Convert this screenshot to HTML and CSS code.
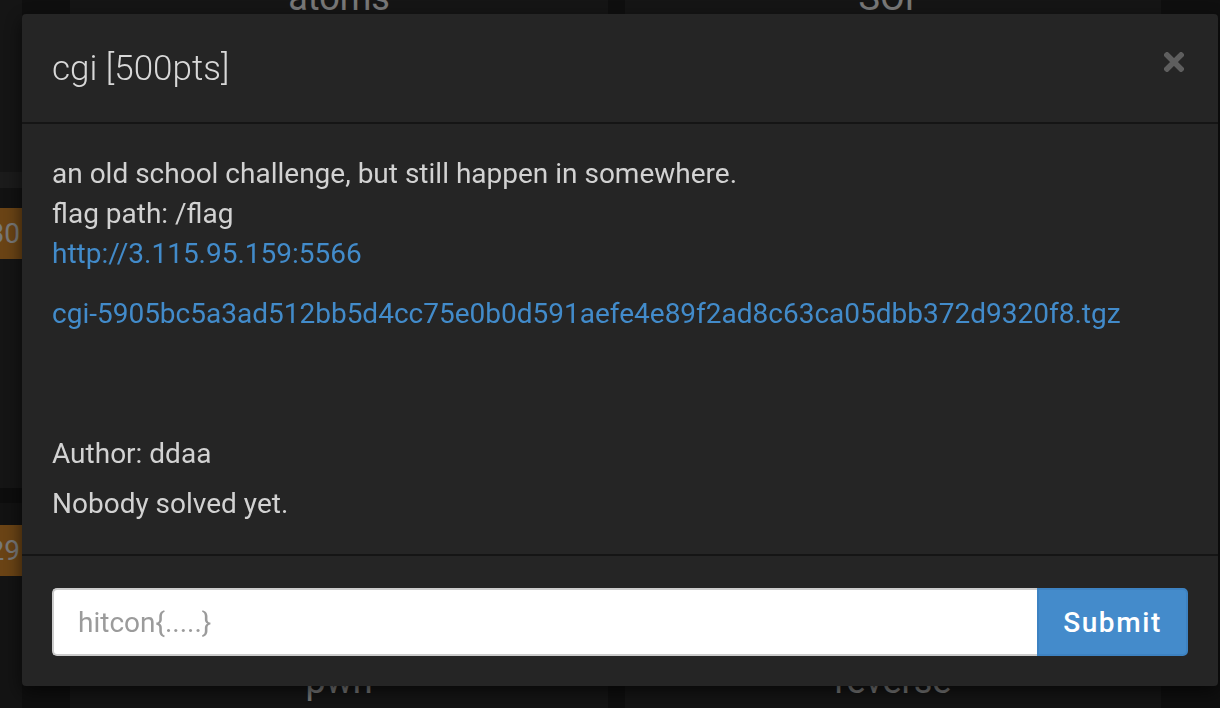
FILE: index.html
```html
<!DOCTYPE html>
<html lang="en">
<head>
<meta charset="utf-8">
<title>cgi [500pts]</title>
<link rel="stylesheet" href="styles.css">
</head>
<body>
<div class="page">
  <div class="side">
    <div class="side-block side-a"></div>
    <div class="side-band"></div>
    <div class="side-block side-b"></div>
    <div class="badge">30</div>
    <div class="side-block side-c"></div>
    <div class="side-gap"></div>
    <div class="side-block side-d"></div>
    <div class="badge">29</div>
    <div class="side-block side-e"></div>
  </div>
  <div class="col col-left">
    <h3 class="cat cat-top">atoms</h3>
    <h3 class="cat cat-bottom">pwn</h3>
  </div>
  <div class="col col-right">
    <h3 class="cat cat-top">SOP</h3>
    <h3 class="cat cat-bottom">reverse</h3>
  </div>
</div>
<div class="backdrop"></div>
<div class="modal">
  <div class="modal-header">
    <h4 class="modal-title">cgi [500pts]</h4>
    <button class="close" type="button" aria-label="Close">
      <svg width="20" height="20" viewBox="0 0 20 20"><path d="M3 3 L17 17 M17 3 L3 17" stroke="#5e5e5e" stroke-width="5.5" stroke-linecap="square" fill="none"/></svg>
    </button>
  </div>
  <div class="modal-body">
    <p class="desc">an old school challenge, but still happen in somewhere.<br>flag path: /flag<br><a href="#">http://3.115.95.159:5566</a></p>
    <p class="file"><a href="#">cgi-5905bc5a3ad512bb5d4cc75e0b0d591aefe4e89f2ad8c63ca05dbb372d9320f8.tgz</a></p>
    <p class="author">Author: ddaa</p>
    <p class="solved">Nobody solved yet.</p>
  </div>
  <div class="modal-footer">
    <form class="input-group" onsubmit="return false">
      <input class="flag-input" type="text" placeholder="hitcon{.....}">
      <button class="btn-submit" type="submit">Submit</button>
    </form>
  </div>
</div>
</body>
</html>
```

FILE: styles.css
```css
* { box-sizing: border-box; }

html, body {
  margin: 0;
  padding: 0;
  width: 1220px;
  height: 708px;
  overflow: hidden;
  background: #1e1e1e;
  font-family: Roboto, "Liberation Sans", Arial, sans-serif;
}

/* ---------- background page (dimmed by backdrop) ---------- */
.page {
  display: flex;
  height: 708px;
  overflow: hidden;
}

.side {
  width: 22px;
  display: flex;
  flex-direction: column;
  flex-shrink: 0;
}
.side-block { background: #2a2a2a; }
.side-a { height: 172px; }
.side-band { height: 16px; background: #363636; }
.side-b { height: 20px; background: #242424; }
.side-c { height: 229px; }
.side-gap { height: 15px; background: #1a1a1a; }
.side-d { height: 22px; background: #242424; }
.side-e { flex: 1; background: #272727; }

.badge {
  height: 51px;
  background: #d4872a;
  color: #f0f0f0;
  font-size: 28px;
  line-height: 51px;
  text-align: right;
  padding-right: 2px;
  overflow: hidden;
  white-space: nowrap;
  direction: rtl;
}

.col {
  display: flex;
  flex-direction: column;
  justify-content: space-between;
  background: #2a2a2a;
  padding-bottom: 7px;
  flex-shrink: 0;
}
.col-left { width: 538px; margin-left: 48px; }
.col-right { width: 536px; margin-left: 17px; }

.cat {
  margin: 0;
  font-size: 36px;
  line-height: 40px;
  font-weight: 400;
  color: #f0f0f0;
  text-align: center;
}
.cat-top { margin-top: -22px; }

.backdrop {
  position: fixed;
  inset: 0;
  background: rgba(0, 0, 0, 0.5);
}

/* ---------- modal ---------- */
.modal {
  position: fixed;
  top: 14px;
  left: 22px;
  width: 1196px;
  height: 672px;
  background: #252525;
  border-radius: 4px;
  box-shadow: 0 6px 18px rgba(0, 0, 0, 0.6);
  display: flex;
  flex-direction: column;
  color: #d2d2d2;
}

.modal-header {
  display: flex;
  justify-content: space-between;
  align-items: flex-start;
  padding: 30px 34px 30px 30px;
  height: 110px;
  border-bottom: 2px solid #151515;
}

.modal-title {
  margin: 0;
  font-size: 35px;
  line-height: 50px;
  font-weight: 300;
  color: #d8d8d8;
}

.close {
  margin: 8px 0 0 0;
  padding: 0;
  border: 0;
  background: none;
  width: 20px;
  height: 20px;
  display: block;
  cursor: pointer;
}
.close svg { display: block; }

.modal-body {
  padding: 30px;
  font-size: 28px;
  line-height: 40px;
  flex: 1;
}
.modal-body p { margin: 0; }
.modal-body .desc { margin-bottom: 20px; }
.modal-body .file { margin-bottom: 100px; }
.modal-body .author { margin-bottom: 10px; }

.modal-body a {
  color: #428bca;
  text-decoration: none;
}

.modal-footer {
  border-top: 2px solid #151515;
  padding: 32px 30px 30px 30px;
}

.input-group {
  display: flex;
  height: 68px;
  margin: 0;
}

.flag-input {
  flex: 1;
  height: 68px;
  border: 2px solid #cccccc;
  border-right: 0;
  border-radius: 5px 0 0 5px;
  background: #ffffff;
  padding: 0 24px;
  font-family: Roboto, "Liberation Sans", Arial, sans-serif;
  font-size: 28px;
  color: #555;
  outline: none;
}
.flag-input::placeholder { color: #9b9b9b; }

.btn-submit {
  width: 151px;
  height: 68px;
  border: 2px solid #3d82c2;
  border-radius: 0 5px 5px 0;
  background: #448bcb;
  color: #ffffff;
  font-family: Roboto, "Liberation Sans", Arial, sans-serif;
  font-size: 28px;
  font-weight: 500;
  letter-spacing: 1.6px;
  padding: 0;
  cursor: pointer;
}
```
